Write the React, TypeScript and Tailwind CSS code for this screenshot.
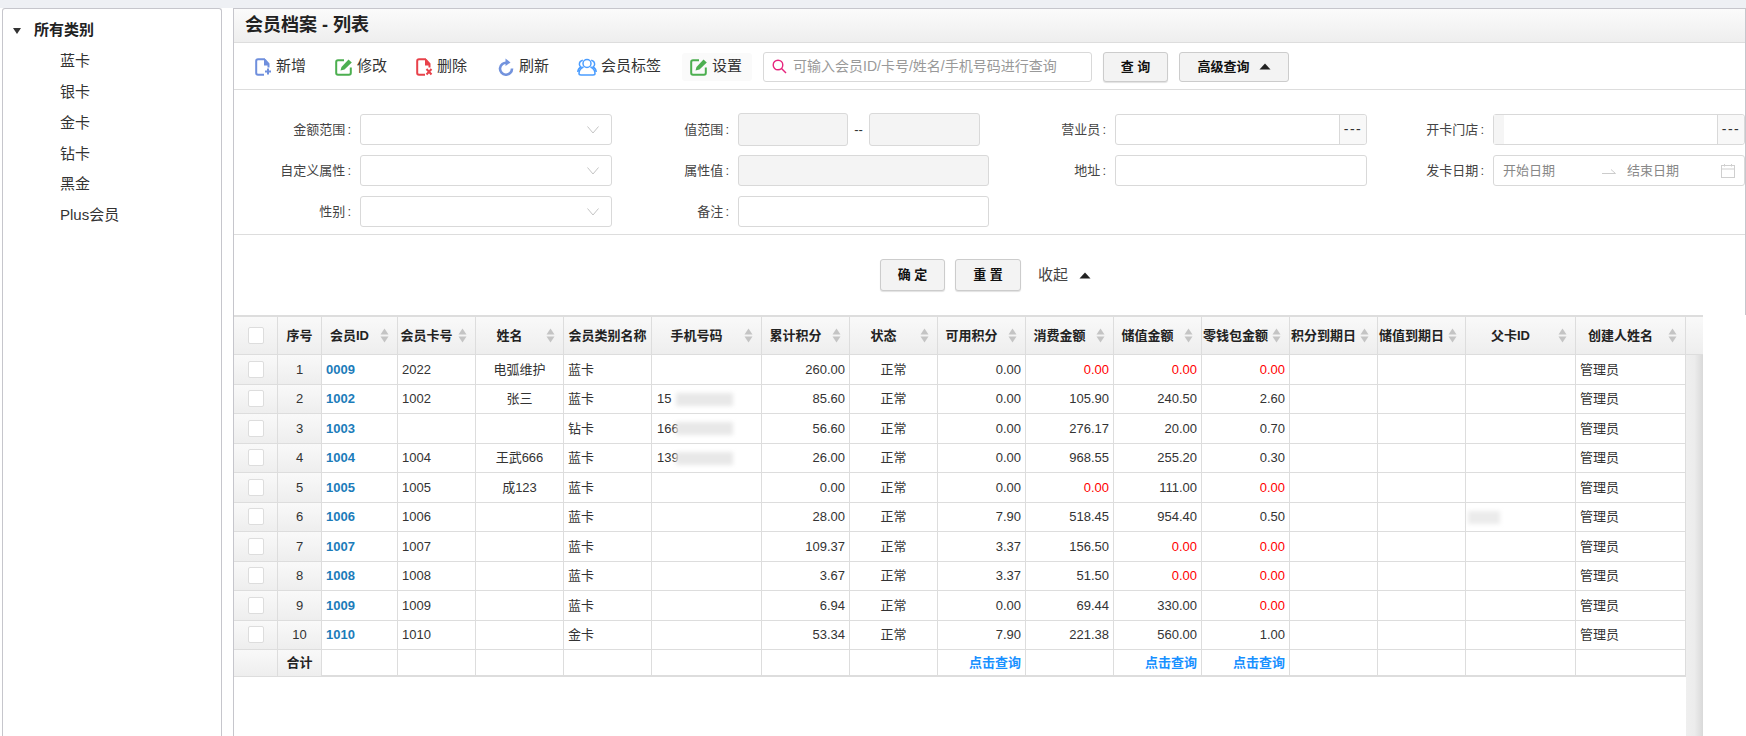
import React from "react";

const GRID = "grid grid-cols-[44px_44px_76px_78px_88px_88px_110px_88px_88px_88px_88px_88px_88px_88px_88px_110px_110px]";

const Sort = () => (
  <svg width="9" height="15" viewBox="0 0 9 15" className="shrink-0">
    <path d="M4.5 0.5 L8.5 6.5 H0.5 Z" fill="#c4c4c4" />
    <path d="M0.5 8.5 H8.5 L4.5 14.5 Z" fill="#c4c4c4" />
  </svg>
);

const Check = () => <div className="w-[16px] h-[17px] bg-white border border-[#ddd] rounded-[2px]" />;

const Caret = () => (
  <svg width="12" height="7" viewBox="0 0 12 7"><path d="M6 0.5 L11.5 6.5 H0.5 Z" fill="#222" /></svg>
);

const Chevron = () => (
  <svg width="12" height="8" viewBox="0 0 12 8" fill="none" stroke="#c4c4c4" strokeWidth="1"><path d="M0.5 0.5 L6 7 L11.5 0.5" /></svg>
);

const FileIcon = ({ color, mark }: { color: string; mark: "plus" | "x" }) => (
  <svg width="17" height="18" viewBox="0 0 17 18" fill="none">
    <path d="M10 1.2H3Q1.2 1.2 1.2 3V15Q1.2 16.8 3 16.8H9" stroke={color} strokeWidth="2" />
    <path d="M9 1 H10.5 L14.5 5.5 V9.5 H12.5 V7.5 H9 Z" fill={color} />
    {mark === "plus" ? (
      <path d="M13 10.5 V16.5 M10 13.5 H16" stroke={color} strokeWidth="2" />
    ) : (
      <path d="M10.5 11 L15.5 16.5 M15.5 11 L10.5 16.5" stroke={color} strokeWidth="2" />
    )}
  </svg>
);

const EditIcon = () => (
  <svg width="18" height="18" viewBox="0 0 18 18" fill="none">
    <path d="M9 2.2H3Q1.2 2.2 1.2 4V15Q1.2 16.8 3 16.8H14Q15.8 16.8 15.8 15V9.5" stroke="#4caf50" strokeWidth="2" />
    <path d="M5.5 12.5 L6.5 9 L13.5 1.5 L16.8 4.5 L9.5 11.5 Z" fill="#4caf50" />
  </svg>
);

const RefreshIcon = () => (
  <svg width="17" height="18" viewBox="0 0 17 18" fill="none">
    <path d="M9 4.8 A6 6 0 1 0 14 10.5" stroke="#7393dd" strokeWidth="2.6" />
    <path d="M7.5 0.5 L12.5 4.5 L7.5 8 Z" fill="#7393dd" />
  </svg>
);

const UsersIcon = () => (
  <svg width="20" height="18" viewBox="0 0 20 18" fill="none" stroke="#4b9dff" strokeWidth="1.5">
    <circle cx="10" cy="5.5" r="4" />
    <path d="M6.5 9 Q2 11 2 15.5 Q2 17 4 17 H16 Q18 17 18 15.5 Q18 11 13.5 9" />
    <path d="M5.8 2.2 Q2.2 3 2.4 6.5 Q2.5 8 4 9 Q1 10.5 0.8 14" />
    <path d="M14.2 2.2 Q17.8 3 17.6 6.5 Q17.5 8 16 9 Q19 10.5 19.2 14" />
  </svg>
);

const SearchIcon = () => (
  <svg width="15" height="15" viewBox="0 0 15 15" fill="none" stroke="#e6237d" strokeWidth="1.4">
    <circle cx="6" cy="6" r="4.8" />
    <path d="M9.5 9.5 L14 14" />
  </svg>
);

const Calendar = () => (
  <svg width="14" height="14" viewBox="0 0 14 14" fill="none" stroke="#cfcfcf" strokeWidth="1">
    <rect x="0.5" y="1.5" width="13" height="12" />
    <path d="M0.5 5 H13.5 M3.5 0 V2.5 M10.5 0 V2.5" />
  </svg>
);

const ToolItem = ({ icon, label, w }: { icon: React.ReactNode; label: string; w: string }) => (
  <div className={`flex items-center gap-[4px] text-[15px] text-[#333] ${w}`}>
    {icon}
    <span>{label}</span>
  </div>
);

const Label = ({ children }: { children: React.ReactNode }) => (
  <div className="w-[126px] pr-[9px] text-right text-[13px] text-[#444] shrink-0 whitespace-pre">
    {children}
    <span className="ml-[2px]">:</span>
  </div>
);

const InputBox = ({ children, extra }: { children?: React.ReactNode; extra?: string }) => (
  <div className={`h-[31px] w-[252px] border border-[#d9d9d9] rounded-[3px] flex items-center ${extra ?? "bg-white"}`}>{children}</div>
);

const SelectBox = () => (
  <InputBox>
    <div className="ml-auto mr-[12px] flex"><Chevron /></div>
  </InputBox>
);

const DotsBox = ({ strip }: { strip?: boolean }) => (
  <InputBox>
    {strip && <div className="w-[10px] h-full bg-[#f5f5f5]" />}
    <div className="ml-auto w-[27px] h-full border-l border-[#d9d9d9] bg-[#f8f8f8] flex items-center justify-center text-[14px] text-[#333] rounded-r-[3px] tracking-[1.5px]">---</div>
  </InputBox>
);

const ActionBtn = ({ label, w, h }: { label: string; w: string; h: string }) => (
  <div className={`${w} ${h} flex items-center justify-center bg-[#f3f3f3] border border-[#ccc] rounded-[3px] shadow-[0_1px_1px_rgba(0,0,0,0.12)] text-[13px] font-bold text-[#111] whitespace-pre`}>
    {label}
  </div>
);

type Head = { t: string; s?: boolean };
const heads: Head[] = [
  { t: "序号" },
  { t: "会员ID", s: true },
  { t: "会员卡号", s: true },
  { t: "姓名", s: true },
  { t: "会员类别名称" },
  { t: "手机号码", s: true },
  { t: "累计积分", s: true },
  { t: "状态", s: true },
  { t: "可用积分", s: true },
  { t: "消费金额", s: true },
  { t: "储值金额", s: true },
  { t: "零钱包金额", s: true },
  { t: "积分到期日", s: true },
  { t: "储值到期日", s: true },
  { t: "父卡ID", s: true },
  { t: "创建人姓名", s: true },
];

const R = "r";
const rows: [string, string, string, string, string, string, string, string, string, string][] = [
  ["0009", "2022", "电弧维护", "蓝卡", "", "260.00", "0.00", "0.00r", "0.00r", "0.00r"],
  ["1002", "1002", "张三", "蓝卡", "15", "85.60", "0.00", "105.90", "240.50", "2.60"],
  ["1003", "", "", "钻卡", "166", "56.60", "0.00", "276.17", "20.00", "0.70"],
  ["1004", "1004", "王武666", "蓝卡", "139", "26.00", "0.00", "968.55", "255.20", "0.30"],
  ["1005", "1005", "成123", "蓝卡", "", "0.00", "0.00", "0.00r", "111.00", "0.00r"],
  ["1006", "1006", "", "蓝卡", "", "28.00", "7.90", "518.45", "954.40", "0.50"],
  ["1007", "1007", "", "蓝卡", "", "109.37", "3.37", "156.50", "0.00r", "0.00r"],
  ["1008", "1008", "", "蓝卡", "", "3.67", "3.37", "51.50", "0.00r", "0.00r"],
  ["1009", "1009", "", "蓝卡", "", "6.94", "0.00", "69.44", "330.00", "0.00r"],
  ["1010", "1010", "", "金卡", "", "53.34", "7.90", "221.38", "560.00", "1.00"],
];

const cell = "border-r border-b border-[#ddd] flex items-center min-w-0 whitespace-nowrap";
const fixedCell = "border-r border-b border-[#ddd] flex items-center justify-center bg-linear-to-b from-[#f9f9f9] to-[#eeeeee]";

const Num = ({ v }: { v: string }) => {
  const red = v.endsWith(R);
  return (
    <div className={`${cell} justify-end pr-[4px] ${red ? "text-[#ff0000]" : ""}`}>{red ? v.slice(0, -1) : v}</div>
  );
};

export default function App() {
  return (
    <div className="w-[1746px] h-[736px] overflow-hidden bg-white flex flex-col [font-family:'Liberation_Sans','Noto_Sans_CJK_SC',sans-serif] text-[#333]">
      <div className="h-[8px] bg-[#eef0f4] shrink-0" />
      <div className="flex flex-1 min-h-0">
        {/* sidebar */}
        <aside className="ml-[2px] w-[220px] shrink-0 border border-b-0 border-[#c6c6cc] rounded-t-[3px] pt-[6px]">
          <div className="h-[31px] flex items-center pl-[10px] text-[15px] text-[#222]">
            <svg width="8" height="6" viewBox="0 0 8 6" className="mr-[13px]"><path d="M0 0 H8 L4 6 Z" fill="#333" /></svg>
            <span className="font-semibold">所有类别</span>
          </div>
          {["蓝卡", "银卡", "金卡", "钻卡", "黑金", "Plus会员"].map((n) => (
            <div key={n} className="h-[30.8px] flex items-center pl-[57px] text-[15px] text-[#333]">{n}</div>
          ))}
        </aside>

        {/* main */}
        <main className="ml-[11px] flex-1 min-w-0 border-l border-[#c6c6cc] flex flex-col">
          <div className="border-t border-r border-[#c6c6cc]">
            <div className="h-[34px] bg-linear-to-b from-[#fbfbfb] to-[#eeeeee] border-b border-[#ddd] flex items-center pl-[11px] text-[18px] font-bold text-[#222]">
              会员档案 - 列表
            </div>
            <div className="h-[47px] border-b border-[#ddd] flex items-center pl-[21px] pt-[1px]">
              <ToolItem icon={<FileIcon color="#6f8fdd" mark="plus" />} label="新增" w="w-[80px]" />
              <ToolItem icon={<EditIcon />} label="修改" w="w-[81px]" />
              <ToolItem icon={<FileIcon color="#e8414a" mark="x" />} label="删除" w="w-[82px]" />
              <ToolItem icon={<RefreshIcon />} label="刷新" w="w-[79px]" />
              <ToolItem icon={<UsersIcon />} label="会员标签" w="w-[105px]" />
              <div className="w-[70px] h-[28px] bg-[#fafafa] rounded-[3px] flex items-center pl-[8px]">
                <ToolItem icon={<EditIcon />} label="设置" w="" />
              </div>
              <div className="ml-[11px] w-[329px] h-[30px] border border-[#d9d9d9] rounded-[3px] flex items-center pl-[8px] gap-[6px] text-[14px] text-[#999]">
                <SearchIcon />
                <span>可输入会员ID/卡号/姓名/手机号码进行查询</span>
              </div>
              <div className="ml-[11px]"><ActionBtn label="查 询" w="w-[65px]" h="h-[30px]" /></div>
              <div className="ml-[11px] w-[110px] h-[30px] flex items-center justify-center gap-[9px] bg-[#f3f3f3] border border-[#ccc] rounded-[3px] text-[13px] font-bold text-[#111]">
                高级查询 <Caret />
              </div>
            </div>

            {/* form */}
            <div className="pt-[24px] pb-[7px] border-b border-[#ddd] grid grid-cols-[378px_377px_378px_378px] auto-rows-[31px] gap-y-[10px]">
              <div className="flex items-center"><Label>金额范围</Label><SelectBox /></div>
              <div className="flex items-center">
                <Label>值范围</Label>
                <div className="w-[110px] h-[33px] bg-[#f4f4f4] border border-[#d9d9d9] rounded-[3px]" />
                <span className="w-[21px] text-center text-[13px]">--</span>
                <div className="w-[111px] h-[33px] bg-[#f4f4f4] border border-[#d9d9d9] rounded-[3px]" />
              </div>
              <div className="flex items-center"><Label>营业员</Label><DotsBox /></div>
              <div className="flex items-center"><Label>开卡门店</Label><DotsBox strip /></div>

              <div className="flex items-center"><Label>自定义属性</Label><SelectBox /></div>
              <div className="flex items-center"><Label>属性值</Label><InputBox extra="bg-[#f4f4f4]" /></div>
              <div className="flex items-center"><Label>地址</Label><InputBox /></div>
              <div className="flex items-center">
                <Label>发卡日期</Label>
                <InputBox>
                  <div className="flex items-center w-full pl-[9px] pr-[9px] text-[13px] text-[#888]">
                    <span className="w-[99px]">开始日期</span>
                    <svg width="14" height="6" viewBox="0 0 14 6" fill="none" stroke="#ccc" strokeWidth="1"><path d="M0 5.5 H13.5 L9 1.5" /></svg>
                    <span className="ml-[11px]">结束日期</span>
                    <span className="ml-auto flex"><Calendar /></span>
                  </div>
                </InputBox>
              </div>

              <div className="flex items-center"><Label>性别</Label><SelectBox /></div>
              <div className="flex items-center"><Label>备注</Label><InputBox /></div>
            </div>

            <div className="h-[80px] flex items-center pl-[646px]">
              <ActionBtn label="确 定" w="w-[65px]" h="h-[32px]" />
              <div className="ml-[10px]"><ActionBtn label="重 置" w="w-[66px]" h="h-[32px]" /></div>
              <span className="ml-[17px] text-[15px] text-[#444]">收起</span>
              <span className="ml-[11px] flex"><Caret /></span>
            </div>
          </div>

          {/* table */}
          <div className="w-[1469px] text-[13px] border-t-2 border-[#ddd] flex-1 min-h-0 flex flex-col">
            <div className="flex">
              <div className={`${GRID} h-[38px]`}>
                <div className={fixedCell}><Check /></div>
                {heads.map((h) => (
                  <div key={h.t} className={`border-r border-b border-[#ddd] bg-linear-to-b from-[#f9f9f9] to-[#eeeeee] flex items-center font-bold text-[#222] whitespace-nowrap ${h.s ? "pr-[5px]" : "justify-center"}`}>
                    {h.s ? (
                      <>
                        <span className="flex-1 min-w-0 flex justify-center">{h.t}</span>
                        <span className="w-[15px] flex justify-center shrink-0"><Sort /></span>
                      </>
                    ) : (
                      h.t
                    )}
                  </div>
                ))}
              </div>
              <div className="w-[17px] bg-linear-to-b from-[#f9f9f9] to-[#eeeeee] border-b border-[#ddd]" />
            </div>
            <div className="flex flex-1 min-h-0">
              <div className="w-[1452px]">
                {rows.map((r, i) => (
                  <div key={r[0]} className={`${GRID} h-[29.5px]`}>
                    <div className={fixedCell}><Check /></div>
                    <div className={fixedCell}>{i + 1}</div>
                    <div className={`${cell} pl-[4px] font-bold text-[#1c7cba]`}>{r[0]}</div>
                    <div className={`${cell} pl-[4px]`}>{r[1]}</div>
                    <div className={`${cell} justify-center`}>{r[2]}</div>
                    <div className={`${cell} pl-[4px]`}>{r[3]}</div>
                    <div className={`${cell} pl-[5px] relative`}>
                      {r[4]}
                      {r[4] && <span className="absolute left-[24px] top-[8px] w-[57px] h-[13px] bg-[#e8e8e8] blur-[2px]" />}
                    </div>
                    <Num v={r[5]} />
                    <div className={`${cell} justify-center`}>正常</div>
                    <Num v={r[6]} />
                    <Num v={r[7]} />
                    <Num v={r[8]} />
                    <Num v={r[9]} />
                    <div className={cell} />
                    <div className={cell} />
                    <div className={`${cell} relative`}>
                      {i === 5 && <span className="absolute left-[2px] top-[8px] w-[32px] h-[13px] bg-[#ebebeb] blur-[2px]" />}
                    </div>
                    <div className={`${cell} pl-[4px]`}>管理员</div>
                  </div>
                ))}
                <div className={`${GRID} h-[27px]`}>
                  <div className={fixedCell} />
                  <div className={`${fixedCell} font-bold text-[#222]`}>合计</div>
                  {Array.from({ length: 15 }).map((_, i) => (
                    <div key={i} className={`${cell} justify-end pr-[4px] font-bold text-[#1890ff] border-b-2`}>
                      {i === 7 || i === 9 || i === 10 ? "点击查询" : ""}
                    </div>
                  ))}
                </div>
              </div>
              <div className="w-[17px] bg-linear-to-r from-[#efefef] via-[#ececec] to-[#d9d9d9]" />
            </div>
          </div>
        </main>
      </div>
    </div>
  );
}
